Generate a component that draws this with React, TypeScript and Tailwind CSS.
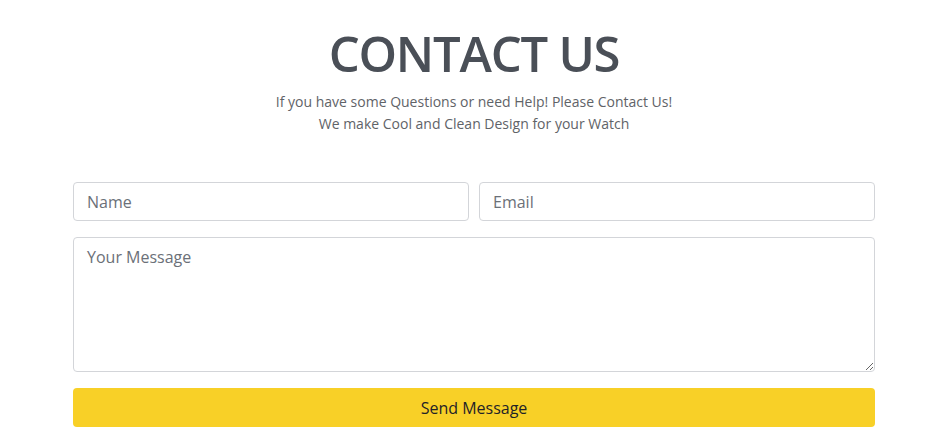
const App = () => {
  return (
    <div className="min-h-screen bg-white font-['Open_Sans',sans-serif] text-gray-600">
      <section className="pl-[73px] pr-[55px] pt-[22px]">
        {/* Heading */}
        <div className="text-center">
          <h1 className="text-[49px] leading-[62px] font-semibold text-[#4a4f57] tracking-tight">CONTACT US</h1>
          <p className="mt-[7px] text-[14px] leading-[22px] text-[#5f6368]">
            If you have some Questions or need Help! Please Contact Us!
            <br />
            We make Cool and Clean Design for your Watch
          </p>
        </div>

        {/* Form */}
        <form className="mt-[47px] flex flex-col gap-4" onSubmit={(e) => e.preventDefault()}>
          <div className="grid grid-cols-2 gap-[10px]">
            <input
              type="text"
              placeholder="Name"
              className="h-[39px] rounded border border-[#d3d5d9] px-[13px] text-[16px] text-gray-700 placeholder:text-[#6b7078] outline-none"
            />
            <input
              type="email"
              placeholder="Email"
              className="h-[39px] rounded border border-[#d3d5d9] px-[13px] text-[16px] text-gray-700 placeholder:text-[#6b7078] outline-none"
            />
          </div>
          <textarea
            placeholder="Your Message"
            className="h-[135px] rounded border border-[#d3d5d9] px-[13px] py-[7px] text-[16px] text-gray-700 placeholder:text-[#6b7078] outline-none"
          />
          <button
            type="submit"
            className="h-[39px] rounded bg-[#f8d027] text-[16px] text-[#1f2328]"
          >
            Send Message
          </button>
        </form>
      </section>
    </div>
  );
};

export default App;
